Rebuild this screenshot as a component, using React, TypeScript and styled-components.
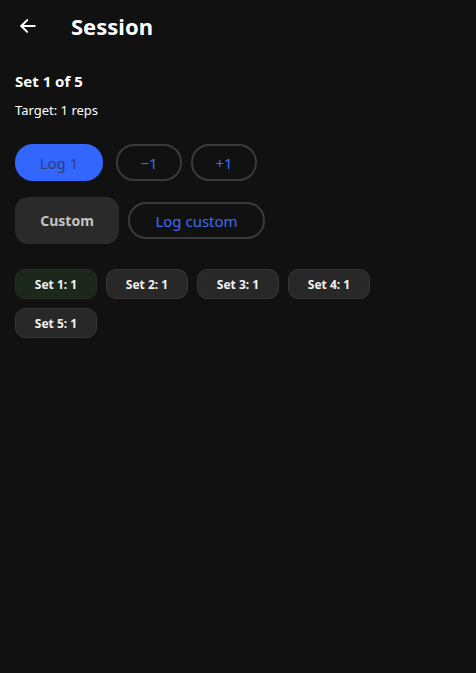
import React from "react";
import styled, { createGlobalStyle } from "styled-components";

const Global = createGlobalStyle`
  html, body { margin: 0; padding: 0; background: #111111; }
  body { font-family: "Noto Sans", "Open Sans", sans-serif; color: #ffffff; }
  #root { min-height: 100vh; background: #111111; }
`;

const Page = styled.div`
  display: flex;
  flex-direction: column;
  padding: 0 15px;
`;

const Header = styled.header`
  display: flex;
  align-items: center;
  height: 51px;
  gap: 32px;
`;

const BackButton = styled.button`
  background: none;
  border: none;
  padding: 0;
  margin-left: 2px;
  width: 22px;
  height: 22px;
  display: flex;
  align-items: center;
  justify-content: center;
  color: #fff;
`;

const Title = styled.h1`
  margin: 0;
  font-size: 22px;
  font-weight: 700;
  letter-spacing: 0;
`;

const SetLabel = styled.div`
  margin-top: 20px;
  font-size: 15px;
  font-weight: 700;
`;

const Target = styled.div`
  margin-top: 10px;
  font-size: 13px;
`;

const Row = styled.div<{ $mt: number }>`
  display: flex;
  align-items: center;
  gap: 9px;
  margin-top: ${(p) => p.$mt}px;
`;

const PrimaryButton = styled.button`
  height: 37px;
  width: 88px;
  border-radius: 18px;
  border: none;
  background: #3366ff;
  color: #2b3f75;
  font-family: inherit;
  font-size: 15px;
`;

const OutlineButton = styled.button<{ $w: number }>`
  height: 37px;
  width: ${(p) => p.$w}px;
  border-radius: 18px;
  border: 2px solid #3a3a3a;
  background: transparent;
  color: #3b6cf5;
  font-family: inherit;
  font-size: 15px;
  box-sizing: border-box;
`;

const FilledButton = styled.button`
  height: 47px;
  width: 104px;
  border-radius: 13px;
  border: none;
  background: #2a2a2a;
  color: #c4c4c4;
  font-family: inherit;
  font-weight: 700;
  font-size: 14px;
`;

const Chips = styled.div`
  display: flex;
  flex-wrap: wrap;
  gap: 9px;
  margin-top: 25px;
  width: 360px;
`;

const Chip = styled.div<{ $active?: boolean }>`
  width: 82px;
  height: 30px;
  box-sizing: border-box;
  border-radius: 10px;
  border: 1px solid ${(p) => (p.$active ? "#243024" : "#353535")};
  background: ${(p) => (p.$active ? "#1d281d" : "#282828")};
  display: flex;
  align-items: center;
  justify-content: center;
  font-size: 12px;
  font-weight: 700;
  color: #f2f2f2;
`;

export default function App() {
  return (
    <>
      <Global />
      <Page>
        <Header>
          <BackButton aria-label="Back">
            <svg width="20" height="20" viewBox="0 0 24 24" fill="none" stroke="#fff" strokeWidth="2.4" strokeLinecap="round" strokeLinejoin="round">
              <path d="M20 12H4" />
              <path d="M11 5l-7 7 7 7" />
            </svg>
          </BackButton>
          <Title>Session</Title>
        </Header>
        <SetLabel>Set 1 of 5</SetLabel>
        <Target>Target: 1 reps</Target>
        <Row $mt={25}>
          <PrimaryButton>Log 1</PrimaryButton>
          <OutlineButton $w={66} style={{ marginLeft: 4 }}>−1</OutlineButton>
          <OutlineButton $w={66}>+1</OutlineButton>
        </Row>
        <Row $mt={16}>
          <FilledButton>Custom</FilledButton>
          <OutlineButton $w={137}>Log custom</OutlineButton>
        </Row>
        <Chips>
          {[1, 2, 3, 4, 5].map((n) => (
            <Chip key={n} $active={n === 1}>
              Set {n}: 1
            </Chip>
          ))}
        </Chips>
      </Page>
    </>
  );
}
